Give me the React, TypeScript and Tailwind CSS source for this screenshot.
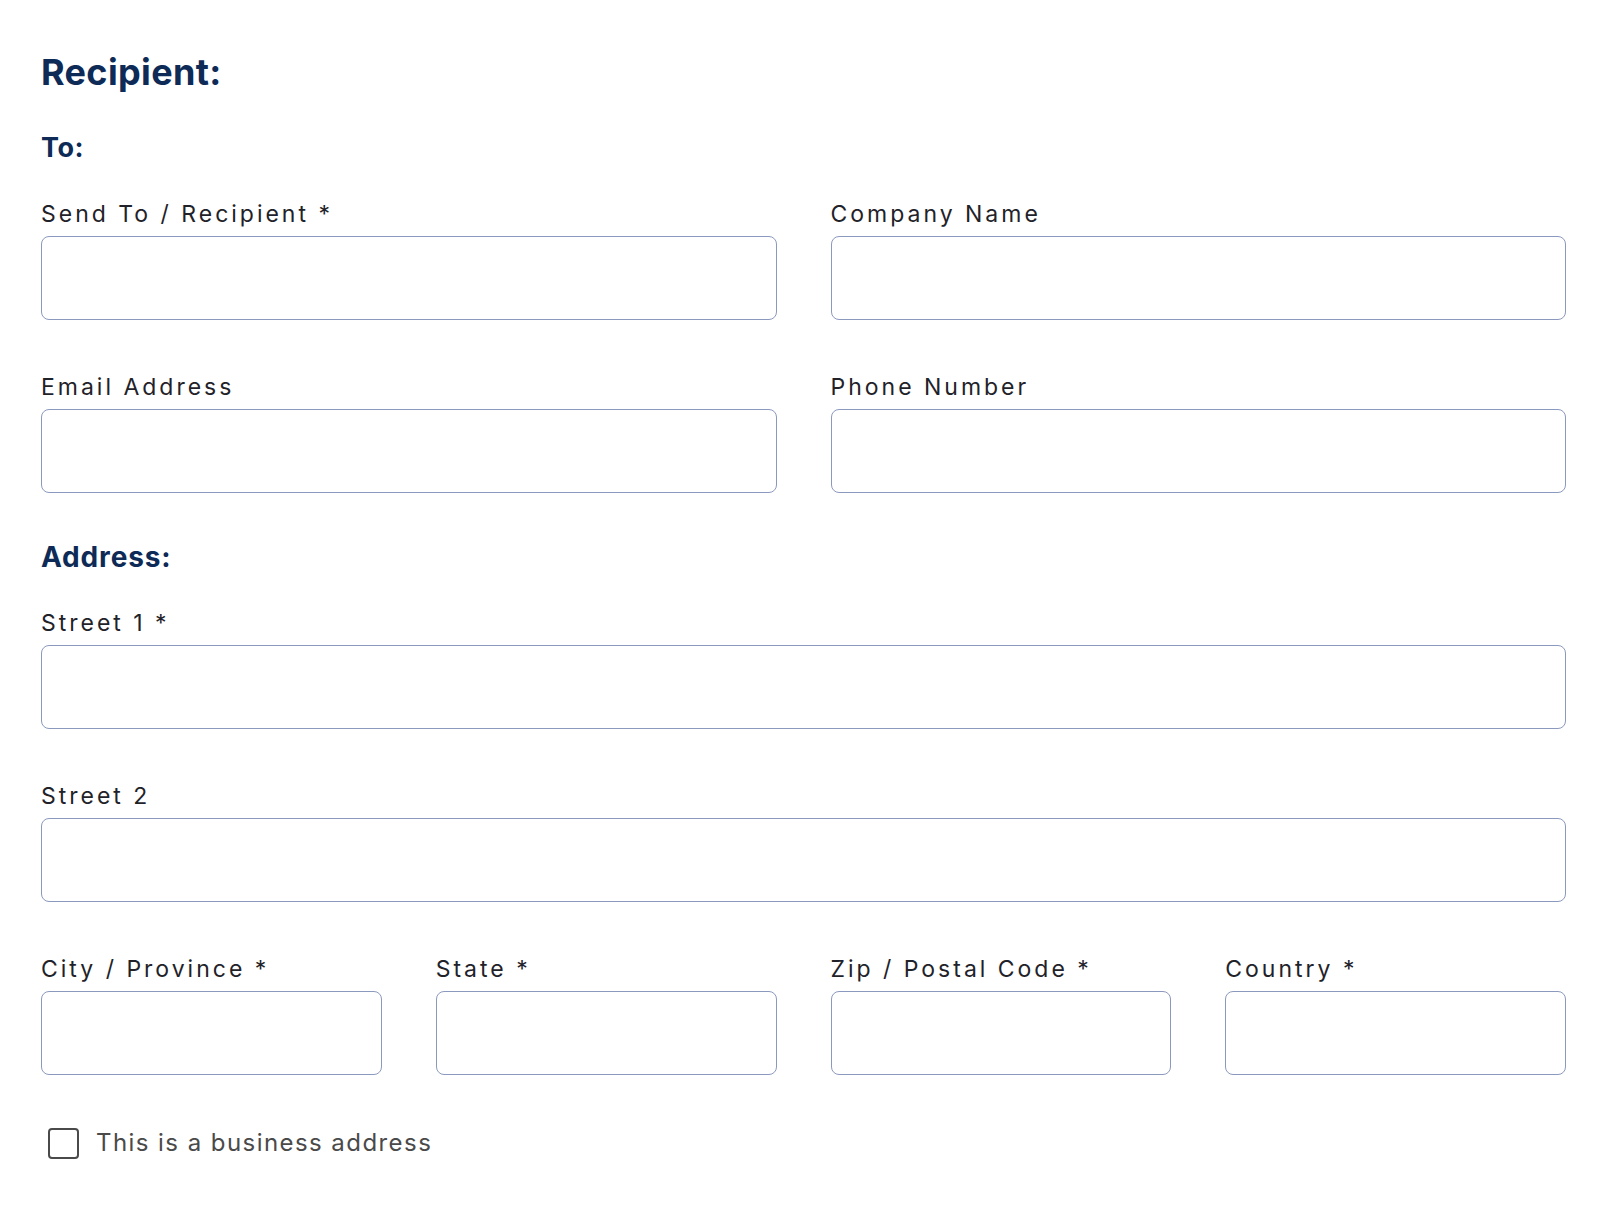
import React, { useState } from 'react';

const labelCls = 'block text-[23px] leading-[30px] tracking-[0.13em] text-[#1f2329] mb-[7px]';
const inputCls =
  'block w-full h-[84px] px-4 rounded-[8px] border border-[#8c99bf] bg-white text-[20px] text-[#1f2430] outline-none focus:border-[#5a6fb0]';

const Field: React.FC<{ label: string }> = ({ label }) => (
  <div>
    <label className={labelCls}>{label}</label>
    <input type="text" className={inputCls} />
  </div>
);

export default function App() {
  const [business, setBusiness] = useState(false);

  return (
    <div className="min-h-screen bg-white font-['Inter','Open_Sans',sans-serif] pl-[41px] pr-[48px] pt-[46px] pb-16">
      <h1 className="text-[36px] leading-[52px] font-bold tracking-[0.01em] text-[#0e2a56]">Recipient:</h1>

      <h2 className="mt-[34px] text-[27px] leading-[32px] font-bold tracking-[0.02em] text-[#0e2a56]">To:</h2>

      <div className="mt-[35px] grid grid-cols-2 gap-x-[54px] gap-y-[52px]">
        <Field label="Send To / Recipient *" />
        <Field label="Company Name" />
        <Field label="Email Address" />
        <Field label="Phone Number" />
      </div>

      <h2 className="mt-[48px] text-[28px] leading-[32px] font-bold tracking-[0.03em] text-[#0e2a56]">Address:</h2>

      <div className="mt-[35px] flex flex-col gap-[52px]">
        <Field label="Street 1 *" />
        <Field label="Street 2" />
        <div className="grid grid-cols-4 gap-x-[54px]">
          <Field label="City / Province *" />
          <Field label="State *" />
          <Field label="Zip / Postal Code *" />
          <Field label="Country *" />
        </div>
      </div>

      <label className="mt-[52px] ml-[7px] flex items-center gap-[17px] cursor-pointer select-none">
        <span
          onClick={() => setBusiness(!business)}
          className="w-[31px] h-[31px] rounded-[4px] border-[2px] border-[#4a4a4a] flex items-center justify-center"
        >
          {business && (
            <svg viewBox="0 0 24 24" className="w-5 h-5" fill="none" stroke="#4a4a4a" strokeWidth="3">
              <path d="M5 12l5 5 9-10" />
            </svg>
          )}
        </span>
        <span className="text-[24px] leading-[32px] text-[#4a4a4a] tracking-[0.06em]">This is a business address</span>
      </label>
    </div>
  );
}
